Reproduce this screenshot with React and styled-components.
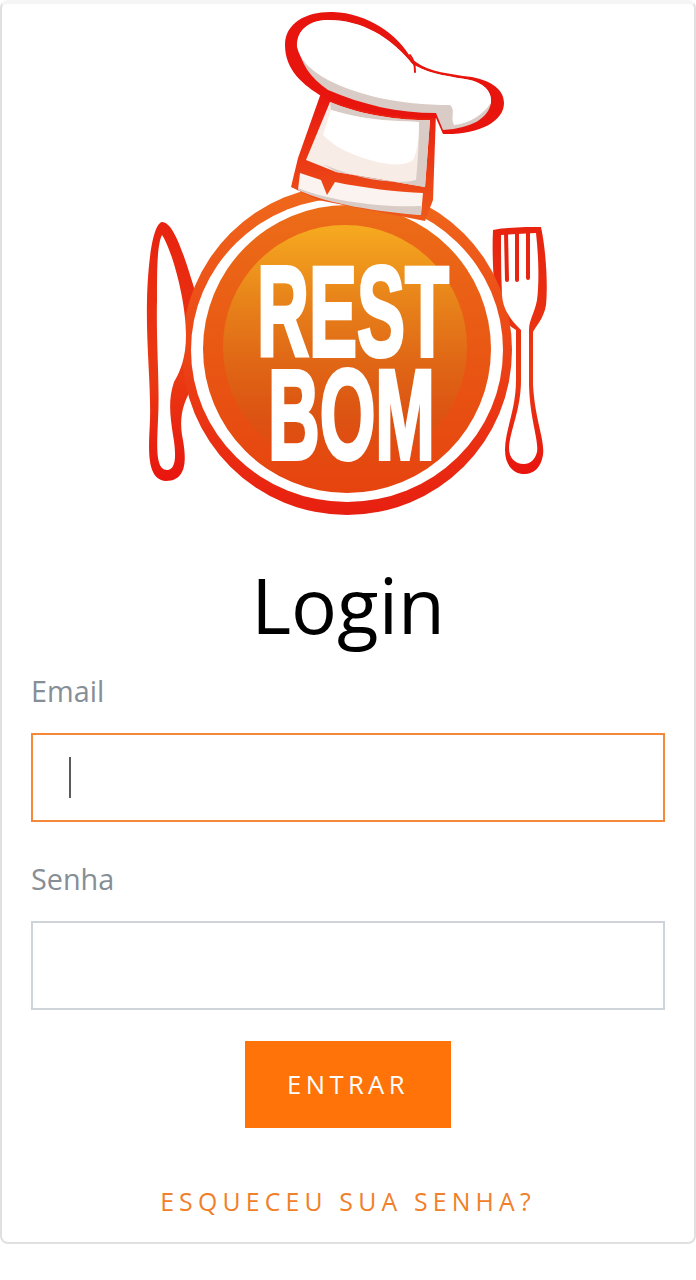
import React from "react";
import styled, { createGlobalStyle } from "styled-components";

const GlobalStyle = createGlobalStyle`
  html, body {
    margin: 0;
    padding: 0;
    background: #fff;
    font-family: "Open Sans", "Liberation Sans", sans-serif;
  }
  * {
    box-sizing: border-box;
  }
`;

const Card = styled.div`
  width: 696px;
  height: 1244px;
  display: flex;
  flex-direction: column;
  background: #fff;
  border: 2px solid #e0e0e0;
  border-top: 4px solid #f5f5f5;
  border-radius: 8px;
  padding: 0 29px;
`;

const LogoSvg = styled.svg`
  display: block;
  width: 440px;
  height: 526px;
  margin: 0 auto;
  flex-shrink: 0;
`;

const Title = styled.h1`
  margin: 24px 0 0;
  font-size: 76.5px;
  font-weight: 400;
  line-height: 100px;
  text-align: center;
  color: #000;
`;

const Form = styled.form`
  display: flex;
  flex-direction: column;
`;

const Field = styled.div`
  display: flex;
  flex-direction: column;
  gap: 23px;
  margin-top: ${(p) => p.$top}px;
`;

const Label = styled.label`
  font-size: 28.8px;
  line-height: 38px;
  color: #868e96;
`;

const InputWrap = styled.div`
  position: relative;
  height: 89px;
`;

const Input = styled.input`
  display: block;
  width: 100%;
  height: 100%;
  padding: 0 38px;
  background: #fff;
  border: 2px solid ${(p) => (p.$focused ? "#f5893a" : "#ced4da")};
  outline: none;
  font: inherit;
`;

const Caret = styled.span`
  position: absolute;
  left: 38px;
  top: 24px;
  width: 2px;
  height: 41px;
  background: #5a5a5a;
`;

const SubmitButton = styled.button`
  display: block;
  align-self: center;
  width: 206px;
  height: 87px;
  margin-top: 31px;
  border: none;
  background: #ff7308;
  color: #fff;
  font-family: inherit;
  font-size: 25.6px;
  letter-spacing: 4.4px;
`;

const ForgotLink = styled.a`
  display: block;
  margin-top: 56px;
  font-size: 24.8px;
  line-height: 34px;
  letter-spacing: 5.2px;
  text-align: center;
  color: #f0802a;
`;

const Wordmark = styled.text`
  font-family: "Liberation Sans", sans-serif;
  font-weight: 700;
  font-size: 128px;
  fill: #fff;
  stroke: #fff;
  stroke-width: 4px;
  stroke-linejoin: miter;
`;

const Logo = () => (
  <LogoSvg viewBox="130 4 440 526" role="img" aria-label="Rest Bom">
    <defs>
      <linearGradient id="ring" x1="0" y1="0" x2="0" y2="1">
        <stop offset="0" stopColor="#ef6a1c" />
        <stop offset="1" stopColor="#e81f10" />
      </linearGradient>
      <linearGradient id="discOuter" x1="0" y1="0" x2="0" y2="1">
        <stop offset="0" stopColor="#ec6d18" />
        <stop offset="1" stopColor="#e6430f" />
      </linearGradient>
      <linearGradient id="discInner" x1="0" y1="0" x2="0" y2="1">
        <stop offset="0" stopColor="#f6aa20" />
        <stop offset="0.3" stopColor="#e8841a" />
        <stop offset="0.55" stopColor="#e06816" />
        <stop offset="0.8" stopColor="#dc5212" />
        <stop offset="1" stopColor="#e6470f" />
      </linearGradient>
      <linearGradient id="hatBody" x1="0" y1="0" x2="0" y2="1">
        <stop offset="0" stopColor="#e8150f" />
        <stop offset="1" stopColor="#ee5a1a" />
      </linearGradient>
      <linearGradient id="cutlery" x1="0" y1="0" x2="0" y2="1">
        <stop offset="0" stopColor="#e8230f" />
        <stop offset="0.6" stopColor="#ea3a12" />
        <stop offset="1" stopColor="#e8150f" />
      </linearGradient>
    </defs>

    {/* knife */}
    <path
      fill="url(#cutlery)"
      d="M164 222 C155 224 150 260 149 300 C148 345 153 385 152 420 C151 445 147 480 168 481 C191 481 188 455 184 435 C181 415 186 400 196 385 L200 300 C190 270 178 222 164 222 Z"
    />

    {/* fork */}
    <path
      fill="url(#cutlery)"
      d="M495 230 C510 227 530 227 543 227 C548 250 550 285 548 305 C546 318 538 326 535 332 L535 385 C537 420 547 440 545 455 C543 468 535 474 527 474 C515 474 507 465 507 450 C507 430 518 410 518 380 L518 330 C505 322 497 310 497 295 C495 275 494 250 495 230 Z"
    />

    {/* plate */}
    <circle cx="349" cy="350" r="165" fill="url(#ring)" />
    <ellipse cx="349" cy="350" rx="156" ry="152" fill="#fff" />
    <circle cx="349" cy="349" r="144" fill="url(#discOuter)" />
    <circle cx="347" cy="347" r="122" fill="url(#discInner)" />

    {/* knife and fork faces */}
    <path
      fill="#fff"
      d="M164 235 C159 245 159 270 159 300 C158 345 162 385 160 420 C159 445 157 470 169 470 C179 470 178 452 175 435 C172 415 170 400 176 382 C182 372 188 358 188 335 C188 300 174 250 164 235 Z"
    />
    <path
      fill="#fff"
      d="M503 235 L538 233 C541 260 541 285 539 300 C537 312 531 320 531 330 L531 385 C532 420 541 440 539 452 C537 460 532 464 526 464 C517 464 511 458 511 448 C512 430 523 410 523 380 L523 330 C513 320 505 310 504 295 C503 275 503 255 503 235 Z"
    />
    <path
      fill="none"
      stroke="#e8230f"
      strokeWidth="4"
      strokeLinecap="round"
      d="M508 232 L509 280 M519 232 L519 280 M530 232 L530 278"
    />

    {/* hat */}
    <path
      fill="url(#hatBody)"
      d="M323 93 L300 158 L293 187 L320 200 L427 221 L435 200 L438 112 Z"
    />
    <path
      fill="#e8150f"
      d="M325 97 C305 85 287 70 287 45 C287 22 310 11 335 12 C370 13 400 35 413 58 C425 70 445 73 465 76 C490 78 506 88 506 103 C506 122 480 135 445 134 L438 118 C400 120 355 110 325 97 Z"
    />
    <path
      fill="#d9cbc5"
      d="M300 45 C298 30 312 20 330 20 C365 20 392 38 411 60 C414 64 416 66 418 66 C432 74 455 77 472 80 C488 84 494 93 493 103 C490 118 475 128 445 130 L438 113 C400 113 365 105 330 90 C312 78 302 62 300 45 Z"
    />
    <path
      fill="#fff"
      d="M299 47 C298 30 312 20 330 20 C365 20 392 38 411 60 C414 64 416 66 418 66 C432 74 455 77 472 80 C488 84 494 93 493 103 C485 115 470 124 456 125 C452 118 458 110 452 105 C400 105 360 95 330 80 C312 70 302 60 299 47 Z"
    />
    <path
      fill="none"
      stroke="#e8150f"
      strokeWidth="2"
      strokeLinecap="round"
      d="M412 55 C416 60 417 65 417 72"
    />
    <path
      fill="#f8ece6"
      d="M332 102 C360 114 400 121 432 120 L427 187 L338 172 L308 160 Z"
    />
    <path
      fill="#d9cbc5"
      d="M332 102 C360 114 400 121 432 120 L427 187 L338 172 L325 164 C360 180 400 185 418 180 C420 160 421 140 421 122 C395 121 365 120 333 110 Z"
    />
    <path
      fill="#fff"
      d="M333 110 C365 120 395 121 421 122 C421 135 420 150 415 160 C405 168 380 165 350 152 C340 148 330 140 325 135 Z"
    />
    <path
      fill="#fbf3ef"
      d="M302 173 L323 180 L329 195 L337 182 C365 188 400 192 425 193 L423 215 C380 210 330 200 300 190 Z"
    />
    <path
      fill="#d9cbc5"
      d="M300 188 C330 200 380 208 423 206 L423 215 C380 212 330 204 300 190 Z"
    />

    {/* wordmark */}
    <Wordmark x="259" y="356" textLength="192" lengthAdjust="spacingAndGlyphs">
      REST
    </Wordmark>
    <Wordmark x="270" y="459" textLength="167" lengthAdjust="spacingAndGlyphs">
      BOM
    </Wordmark>
  </LogoSvg>
);

const App = () => (
  <>
    <GlobalStyle />
    <Card>
      <Logo />
      <Title>Login</Title>
      <Form onSubmit={(e) => e.preventDefault()}>
        <Field $top={18}>
          <Label htmlFor="email">Email</Label>
          <InputWrap>
            <Input id="email" type="email" $focused />
            <Caret />
          </InputWrap>
        </Field>
        <Field $top={38}>
          <Label htmlFor="senha">Senha</Label>
          <InputWrap>
            <Input id="senha" type="password" />
          </InputWrap>
        </Field>
        <SubmitButton type="submit">ENTRAR</SubmitButton>
      </Form>
      <ForgotLink>ESQUECEU SUA SENHA?</ForgotLink>
    </Card>
  </>
);

export default App;
